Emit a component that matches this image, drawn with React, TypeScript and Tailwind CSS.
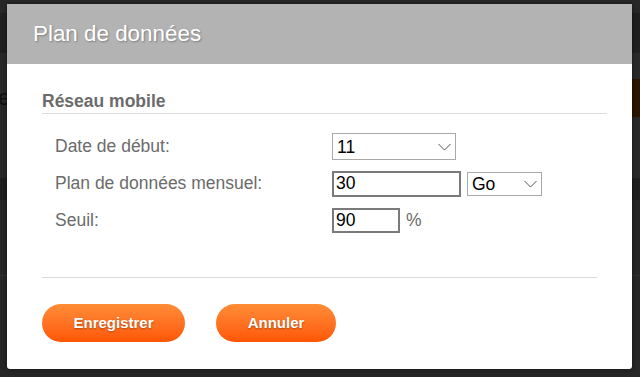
/* eslint-disable */
// @ts-nocheck
import { useState } from "react";

function Chevron() {
  return (
    <svg width="13" height="7" viewBox="0 0 13 7" className="pointer-events-none absolute right-[5px] top-1/2 -translate-y-1/2">
      <path d="M0.5 0.5 L6.5 6.5 L12.5 0.5" fill="none" stroke="#555" strokeWidth="1" />
    </svg>
  );
}

function Select({ value, options, width, height }) {
  const [v, setV] = useState(value);
  return (
    <div className="relative" style={{ width, height }}>
      <select
        value={v}
        onChange={(e) => setV(e.target.value)}
        className="h-full w-full appearance-none border border-[#a9a9a9] bg-white pl-[4px] pt-[2px] text-[17.5px] leading-none text-black outline-none"
      >
        {options.map((o) => (
          <option key={o} value={o}>
            {o}
          </option>
        ))}
      </select>
      <Chevron />
    </div>
  );
}

const FIELD_TEXT = "text-[17.5px] text-[#6b6b6b]";

export default function App() {
  const days = Array.from({ length: 31 }, (_, i) => String(i + 1));

  return (
    <div className="relative h-[377px] w-[640px] overflow-hidden bg-[#262626] font-['Liberation_Sans',Arial,sans-serif]">
      {/* ── dimmed page behind the dialog ── */}
      <div className="h-[13px] bg-[#272727]" />
      <div className="h-[40px] bg-[#1f1f1f]" />
      <div className="h-[125px] bg-[#282828] pt-[26px]">
        <div className="flex h-[38px] items-center justify-between">
          <span className="-ml-[7px] text-[22px] leading-none text-[#0f0f0f]">le</span>
          <div className="flex h-[38px] w-[40px] items-center bg-[#2a1500] pl-[6px] text-[22px] text-[#555]">
            lo
          </div>
        </div>
      </div>
      <div className="h-[22px] bg-[#1e1e1e]" />
      <div className="h-[76px] border-b border-[#2f2f2f] bg-[#262626]" />

      {/* ── dialog ── */}
      <div className="absolute left-[7px] top-[4px] flex h-[365px] w-[625px] flex-col overflow-hidden rounded-b-[3px] bg-white shadow-[0_0_4px_rgba(0,0,0,0.5)]">
        <div className="flex h-[60px] shrink-0 items-center bg-[#b3b3b3] pl-[26px]">
          <h1 className="text-[22.4px] text-white [text-shadow:1px_1px_2px_rgba(0,0,0,0.3)]">Plan de données</h1>
        </div>

        <div className="flex flex-1 flex-col pl-[35px]">
          <div className="mr-[25px] mt-[27px] border-b border-[#dcdcdc] pb-[2px]">
            <h2 className="text-[17.5px] font-bold leading-[20px] text-[#6b6b6b]">Réseau mobile</h2>
          </div>

          <div className="mt-[19px] flex flex-col gap-[10px] pl-[13px]">
            <div className="flex h-[27px] items-center">
              <span className={`w-[277px] ${FIELD_TEXT}`}>Date de début:</span>
              <Select value="11" options={days} width={124} height={27} />
            </div>

            <div className="flex h-[27px] items-center">
              <span className={`w-[277px] ${FIELD_TEXT}`}>Plan de données mensuel:</span>
              <input
                defaultValue="30"
                className="h-[26px] w-[129px] border-2 border-[#7a7a7a] bg-white pl-[2px] text-[17.5px] text-black outline-none"
              />
              <div className="ml-[6px]">
                <Select value="Go" options={["Mo", "Go"]} width={75} height={24} />
              </div>
            </div>

            <div className="flex h-[27px] items-center">
              <span className={`w-[277px] ${FIELD_TEXT}`}>Seuil:</span>
              <input
                defaultValue="90"
                className="h-[25px] w-[68px] border-2 border-[#7a7a7a] bg-white pl-[2px] text-[17.5px] text-black outline-none"
              />
              <span className={`ml-[6px] ${FIELD_TEXT}`}>%</span>
            </div>
          </div>

          <div className="mr-[35px] mt-[43px] border-t border-[#d9d9d9]" />

          <div className="mt-[26px] flex gap-[31px]">
            <button className="h-[38px] w-[143px] rounded-full bg-gradient-to-b from-[#ff8c36] to-[#ff5500] text-[15px] font-bold text-white [text-shadow:0_1px_2px_rgba(0,0,0,0.35)]">
              Enregistrer
            </button>
            <button className="h-[38px] w-[120px] rounded-full bg-gradient-to-b from-[#ff8c36] to-[#ff5500] text-[15px] font-bold text-white [text-shadow:0_1px_2px_rgba(0,0,0,0.35)]">
              Annuler
            </button>
          </div>
        </div>
      </div>
    </div>
  );
}
